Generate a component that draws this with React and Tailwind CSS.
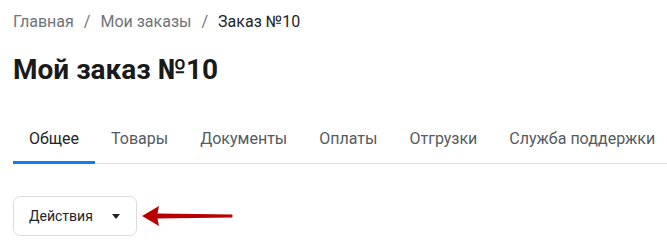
const tabs = ["Общее", "Товары", "Документы", "Оплаты", "Отгрузки", "Служба поддержки"];

const App = () => {
  return (
    <div className="w-[667px] h-[247px] bg-white overflow-hidden font-['Roboto',sans-serif] text-[#212529]">
      <div className="pt-[12px] pl-[13px]">
        <nav className="flex items-center text-[16px] leading-[20px]">
          <span className="text-[#6f7479]">Главная</span>
          <span className="text-[#6f7479] px-[10px]">/</span>
          <span className="text-[#6f7479]">Мои заказы</span>
          <span className="text-[#6f7479] px-[10px]">/</span>
          <span className="text-[#212529]">Заказ №10</span>
        </nav>
        <h1 className="mt-[21px] text-[28px] leading-[34px] font-bold text-[#1a1a1a]">Мой заказ №10</h1>
      </div>

      <div className="mt-[42px] ml-[13px] flex border-b border-[#dee2e6]">
        {tabs.map((t, i) => (
          <div
            key={t}
            className={
              i === 0
                ? "px-[16px] pb-[12px] text-[16px] leading-[20px] whitespace-nowrap text-[#212529] border-b-[3px] border-[#0d7bf2] -mb-[1px]"
                : "px-[16px] pb-[12px] text-[16px] leading-[20px] whitespace-nowrap text-[#555b61] border-b-[3px] border-transparent -mb-[1px]"
            }
          >
            {t}
          </div>
        ))}
      </div>

      <div className="mt-[32px] ml-[13px] flex items-center">
        <button className="h-[40px] w-[124px] flex items-center pl-[15px] pr-[16px] border border-[#dcdcdc] rounded-[7px] bg-white text-[14px] text-[#212529]">
          <span>Действия</span>
          <svg className="ml-auto" width="8" height="5" viewBox="0 0 8 5">
            <path d="M0 0 H8 L4 5 Z" fill="#222" />
          </svg>
        </button>
        <svg className="ml-[5px]" width="92" height="24" viewBox="0 0 92 24">
          <path d="M0 12 L17 2 L15.5 9.5 L90 10.5 Q91.5 12 90 13.5 L15.5 14.5 L17 22 Z" fill="#b80000" />
        </svg>
      </div>
    </div>
  );
};

export default App;
